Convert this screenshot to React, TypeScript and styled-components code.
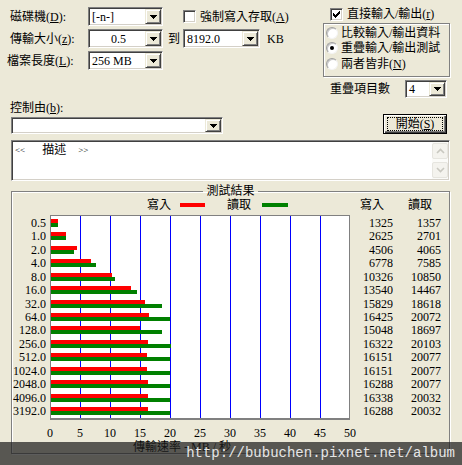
import React from 'react';
import styled, { createGlobalStyle } from 'styled-components';

// --- data ---

const sizes = ['0.5', '1.0', '2.0', '4.0', '8.0', '16.0', '32.0', '64.0', '128.0', '256.0', '512.0', '1024.0', '2048.0', '4096.0', '3192.0'];
const writes = [1325, 2625, 4506, 6778, 10326, 13540, 15829, 16425, 15048, 16322, 16151, 16151, 16288, 16338, 16288];
const reads = [1357, 2701, 4065, 7585, 10850, 14467, 18618, 20072, 18697, 20103, 20077, 20077, 20077, 20032, 20032];
const ticks = [0, 5, 10, 15, 20, 25, 30, 35, 40, 45, 50];

const PLOT_W = 298;
const PLOT_H = 202;

// --- styling ---

const GlobalStyle = createGlobalStyle`
  html, body { margin: 0; padding: 0; background: #ECE9D8; }
  body {
    font-family: "Liberation Serif", "Noto Sans CJK TC", serif;
    font-size: 12px;
    color: #000;
  }
  * { box-sizing: border-box; }
`;

const Window = styled.div`
  position: relative;
  width: 462px;
  height: 465px;
  overflow: hidden;
  background: #ECE9D8;
  display: flex;
  flex-direction: column;
`;

const TopSection = styled.div`
  display: flex;
  height: 98px;
`;

const LeftCol = styled.div`
  width: 323px;
  padding-top: 7px;
  display: flex;
  flex-direction: column;
  gap: 3px;
`;

const RightCol = styled.div`
  width: 127px;
  padding-top: 7px;
  display: flex;
  flex-direction: column;
`;

const FormRow = styled.div`
  display: flex;
  align-items: center;
  height: 19px;
  line-height: 14px;
  white-space: nowrap;
`;

const FieldLabel = styled.span<{ $indent: number }>`
  width: 88px;
  flex: none;
  padding-left: ${(p) => p.$indent}px;
`;

const Key = styled.span`
  text-decoration: underline;
`;

const Sunken = styled.div`
  border: 1px solid;
  border-color: #808080 #fff #fff #808080;
  box-shadow: inset 1px 1px 0 #404040, inset -1px -1px 0 #d4d0c8;
  background: #fff;
`;

const ComboFrame = styled(Sunken)<{ $w: number; $h?: number; $gap?: number }>`
  width: ${(p) => p.$w}px;
  height: ${(p) => p.$h ?? 19}px;
  margin-left: ${(p) => p.$gap ?? 0}px;
  flex: none;
  display: flex;
  padding: 1px;
`;

const ComboText = styled.span<{ $center?: boolean }>`
  flex: 1;
  padding-left: 2px;
  display: flex;
  align-items: center;
  justify-content: ${(p) => (p.$center ? 'center' : 'flex-start')};
  white-space: nowrap;
  overflow: hidden;
`;

const DropButton = styled.span`
  width: 16px;
  flex: none;
  background: #ece9d8;
  border: 1px solid;
  border-color: #ece9d8 #404040 #404040 #ece9d8;
  box-shadow: inset 1px 1px 0 #fff, inset -1px -1px 0 #808080;
  display: flex;
  align-items: center;
  justify-content: center;
`;

const CheckBox = styled(Sunken)`
  width: 13px;
  height: 13px;
  flex: none;
  display: flex;
  align-items: center;
  justify-content: center;
`;

const CheckLabel = styled.label<{ $gap?: number; $indent?: number }>`
  display: flex;
  align-items: center;
  gap: 4px;
  margin-left: ${(p) => p.$gap ?? 0}px;
  padding-left: ${(p) => p.$indent ?? 0}px;
  height: 14px;
  line-height: 14px;
  white-space: nowrap;
`;

const PlainText = styled.span<{ $gap?: number }>`
  margin-left: ${(p) => p.$gap ?? 0}px;
`;

const RadioGroup = styled.div`
  margin-top: 2px;
  height: 54px;
  border: 1px solid #808080;
  box-shadow: inset 1px 1px 0 #fff, 1px 1px 0 #fff;
  padding: 1px 0 0 2px;
  display: flex;
  flex-direction: column;
`;

const RadioRow = styled.div`
  display: flex;
  align-items: center;
  gap: 3px;
  height: 15.5px;
  line-height: 14px;
  white-space: nowrap;
`;

const RadioDot = styled.span<{ $on?: boolean }>`
  position: relative;
  width: 12px;
  height: 12px;
  flex: none;
  border-radius: 50%;
  background: #fff;
  border: 1px solid;
  border-color: #a0a0a0 #f4f4f4 #f4f4f4 #a0a0a0;
  box-shadow: inset 1px 1px 0 #c8c8c8;
  &::after {
    content: '';
    display: ${(p) => (p.$on ? 'block' : 'none')};
    position: absolute;
    left: 3px;
    top: 3px;
    width: 4px;
    height: 4px;
    border-radius: 50%;
    background: #000;
  }
`;

const OverlapRow = styled.div`
  margin-top: 3px;
  height: 18px;
  display: flex;
  align-items: center;
  justify-content: space-between;
  padding: 0 3px 0 7px;
  line-height: 14px;
`;

const ControlLabel = styled.div`
  margin-top: 3px;
  padding-left: 10px;
  line-height: 14px;
`;

const ControlRow = styled.div`
  display: flex;
  align-items: flex-end;
  justify-content: space-between;
  height: 19px;
  padding: 0 15px 0 11px;
`;

const PushButton = styled.button`
  width: 64px;
  height: 20px;
  padding: 0;
  font: inherit;
  color: #000;
  background: #ece9d8;
  border: 1px solid #000;
  box-shadow: inset 1px 1px 0 #fff, inset -1px -1px 0 #404040, inset -2px -2px 0 #808080;
  display: flex;
  align-items: center;
  justify-content: center;
`;

const FocusRect = styled.span`
  width: 56px;
  height: 14px;
  border: 1px dotted #000;
  display: flex;
  align-items: center;
  justify-content: center;
  line-height: 12px;
  white-space: nowrap;
`;

const TextBox = styled(Sunken)`
  margin: 6px 0 0 11px;
  width: 439px;
  height: 41px;
  display: flex;
  padding: 1px;
`;

const TextContent = styled.div`
  flex: 1;
  padding: 1px 2px;
  line-height: 14px;
  display: flex;
  align-items: flex-start;
  white-space: nowrap;
`;

const Chevrons = styled.span<{ $gap?: number }>`
  font-size: 9px;
  margin-left: ${(p) => p.$gap ?? 0}px;
`;

const ScrollBar = styled.div`
  width: 16px;
  flex: none;
  display: flex;
  flex-direction: column;
  justify-content: space-between;
  background: #fbfbf8;
  padding: 1px 0;
`;

const ScrollBtn = styled.div`
  height: 16px;
  border: 1px solid #e6e5df;
  border-radius: 2px;
  background: #f4f3ee;
  display: flex;
  align-items: center;
  justify-content: center;
`;

const ResultGroup = styled.fieldset`
  margin: 3px 0 0 11px;
  padding: 0;
  min-width: 0;
  width: 439px;
  height: 270px;
  border: 1px solid #808080;
  box-shadow: inset 1px 1px 0 #fff, 1px 1px 0 #fff;
`;

const GroupTitle = styled.legend`
  margin: 0 auto;
  padding: 0 3px;
  line-height: 14px;
`;

const HeaderRow = styled.div`
  margin-top: 1px;
  height: 12px;
  line-height: 12px;
  display: flex;
  align-items: center;
  padding-left: 135px;
  white-space: nowrap;
`;

const LegendBar = styled.span<{ $color: string; $gap: number; $w: number }>`
  width: ${(p) => p.$w}px;
  height: 4px;
  margin-left: ${(p) => p.$gap}px;
  background: ${(p) => p.$color};
`;

const ChartBody = styled.div`
  margin-top: 4px;
  height: 205px;
  display: flex;
`;

const ValueCol = styled.div<{ $w: number; $gap?: number }>`
  width: ${(p) => p.$w}px;
  margin-left: ${(p) => p.$gap ?? 0}px;
  padding: 1px 0 2px;
  display: grid;
  grid-template-rows: repeat(15, 1fr);
  overflow: hidden;
`;

const ValueCell = styled.div`
  display: flex;
  align-items: center;
  justify-content: flex-end;
  line-height: 12px;
  white-space: nowrap;
`;

const Plot = styled.div`
  width: 300px;
  height: 205px;
  flex: none;
  background: #fff;
  border: 1px solid #808080;
  border-bottom-width: 2px;
  svg { display: block; }
`;

const AxisRow = styled.div`
  margin: 7px 0 0 23px;
  display: grid;
  grid-template-columns: repeat(11, 30px);
  line-height: 12px;
  text-align: center;
`;

const AxisTitle = styled.div`
  margin: 2px 0 0 121px;
  line-height: 12px;
  white-space: nowrap;
`;

const Watermark = styled.div`
  position: absolute;
  left: 0;
  right: 0;
  bottom: 0;
  height: 23px;
  background: rgba(30, 30, 30, 0.72);
  color: #e6e6e6;
  font-family: "Liberation Mono", monospace;
  font-size: 14px;
  line-height: 23px;
  text-align: right;
  padding-right: 7px;
  white-space: nowrap;
`;

// --- small drawings ---

const DownArrow = () => (
  <svg width="7" height="4" viewBox="0 0 7 4">
    <path d="M0 0h7v1H0zM1 1h5v1H1zM2 2h3v1H2zM3 3h1v1H3z" fill="#000" />
  </svg>
);

const CheckMark = () => (
  <svg width="7" height="7" viewBox="0 0 7 7">
    <path
      d="M6 0h1v1H6zM5 1h2v1H5zM0 2h1v1H0zM4 2h3v1H4zM0 3h2v1H0zM3 3h3v1H3zM0 4h5v1H0zM1 5h3v1H1zM2 6h1v1H2z"
      fill="#000"
    />
  </svg>
);

const ScrollChevron = ({ up }: { up?: boolean }) => (
  <svg width="9" height="6" viewBox="0 0 9 6">
    <polyline
      points={up ? '1,5 4.5,1.5 8,5' : '1,1 4.5,4.5 8,1'}
      fill="none"
      stroke="#c9c8c0"
      strokeWidth="1.6"
    />
  </svg>
);

const Combo = ({ w, h, gap, value, center }: { w: number; h?: number; gap?: number; value: string; center?: boolean }) => (
  <ComboFrame $w={w} $h={h} $gap={gap}>
    <ComboText $center={center}>{value}</ComboText>
    <DropButton>
      <DownArrow />
    </DropButton>
  </ComboFrame>
);

const BarPlot = () => {
  const rowH = PLOT_H / sizes.length;
  return (
    <svg width={PLOT_W} height={PLOT_H} shapeRendering="crispEdges">
      {[1, 2, 3, 4, 5, 6, 7, 8, 9].map((k) => (
        <rect key={k} x={30 * k - 1} y={0} width={1} height={PLOT_H} fill="#0000ff" />
      ))}
      {sizes.map((s, i) => {
        const y = Math.round(i * rowH + (rowH - 8) / 2);
        return (
          <g key={s}>
            <rect x={0} y={y} width={Math.round(writes[i] * 0.006) - 1} height={4} fill="#ff0000" />
            <rect x={0} y={y + 4} width={Math.round(reads[i] * 0.006) - 1} height={4} fill="#008000" />
          </g>
        );
      })}
    </svg>
  );
};

export default function App() {
  return (
    <>
      <GlobalStyle />
      <Window>
        <TopSection>
          <LeftCol>
            <FormRow>
              <FieldLabel $indent={10}>
                磁碟機(<Key>D</Key>):
              </FieldLabel>
              <Combo w={75} value="[-n-]" />
              <CheckLabel $gap={20}>
                <CheckBox />
                <span>
                  強制寫入存取(<Key>A</Key>)
                </span>
              </CheckLabel>
            </FormRow>
            <FormRow>
              <FieldLabel $indent={10}>
                傳輸大小(<Key>z</Key>):
              </FieldLabel>
              <Combo w={75} value="0.5" center />
              <PlainText $gap={5}>到</PlainText>
              <Combo w={77} gap={3} value="8192.0" />
              <PlainText $gap={7}>KB</PlainText>
            </FormRow>
            <FormRow>
              <FieldLabel $indent={7}>
                檔案長度(<Key>L</Key>):
              </FieldLabel>
              <Combo w={75} value="256 MB" />
            </FormRow>
          </LeftCol>

          <RightCol>
            <CheckLabel $indent={7}>
              <CheckBox>
                <CheckMark />
              </CheckBox>
              <span>
                直接輸入/輸出(<Key>r</Key>)
              </span>
            </CheckLabel>
            <RadioGroup>
              <RadioRow>
                <RadioDot />
                <span>比較輸入/輸出資料</span>
              </RadioRow>
              <RadioRow>
                <RadioDot $on />
                <span>重疊輸入/輸出測試</span>
              </RadioRow>
              <RadioRow>
                <RadioDot />
                <span>
                  兩者皆非(<Key>N</Key>)
                </span>
              </RadioRow>
            </RadioGroup>
            <OverlapRow>
              <span>重疊項目數</span>
              <Combo w={42} h={18} value="4" />
            </OverlapRow>
          </RightCol>
        </TopSection>

        <ControlLabel>
          控制由(<Key>b</Key>):
        </ControlLabel>
        <ControlRow>
          <Combo w={212} h={17} value="" />
          <PushButton>
            <FocusRect>
              <span>
                開始(<Key>S</Key>)
              </span>
            </FocusRect>
          </PushButton>
        </ControlRow>

        <TextBox>
          <TextContent>
            <Chevrons $gap={0}>&lt;&lt;</Chevrons>
            <PlainText $gap={17}>描述</PlainText>
            <Chevrons $gap={12}>&gt;&gt;</Chevrons>
          </TextContent>
          <ScrollBar>
            <ScrollBtn>
              <ScrollChevron up />
            </ScrollBtn>
            <ScrollBtn>
              <ScrollChevron />
            </ScrollBtn>
          </ScrollBar>
        </TextBox>

        <ResultGroup>
          <GroupTitle>測試結果</GroupTitle>
          <HeaderRow>
            <span>寫入</span>
            <LegendBar $color="#ff0000" $gap={9} $w={25} />
            <PlainText $gap={22}>讀取</PlainText>
            <LegendBar $color="#008000" $gap={11} $w={26} />
            <PlainText $gap={72}>寫入</PlainText>
            <PlainText $gap={24}>讀取</PlainText>
          </HeaderRow>
          <ChartBody>
            <ValueCol $w={34}>
              {sizes.map((s) => (
                <ValueCell key={s}>{s}</ValueCell>
              ))}
            </ValueCol>
            <ValueCol $w={4} />
            <Plot>
              <BarPlot />
            </Plot>
            <ValueCol $w={43}>
              {writes.map((v, i) => (
                <ValueCell key={i}>{v}</ValueCell>
              ))}
            </ValueCol>
            <ValueCol $w={48}>
              {reads.map((v, i) => (
                <ValueCell key={i}>{v}</ValueCell>
              ))}
            </ValueCol>
          </ChartBody>
          <AxisRow>
            {ticks.map((t) => (
              <span key={t}>{t}</span>
            ))}
          </AxisRow>
          <AxisTitle>傳輸速率 - MB / 秒</AxisTitle>
        </ResultGroup>

        <Watermark>http://bubuchen.pixnet.net/album</Watermark>
      </Window>
    </>
  );
}
